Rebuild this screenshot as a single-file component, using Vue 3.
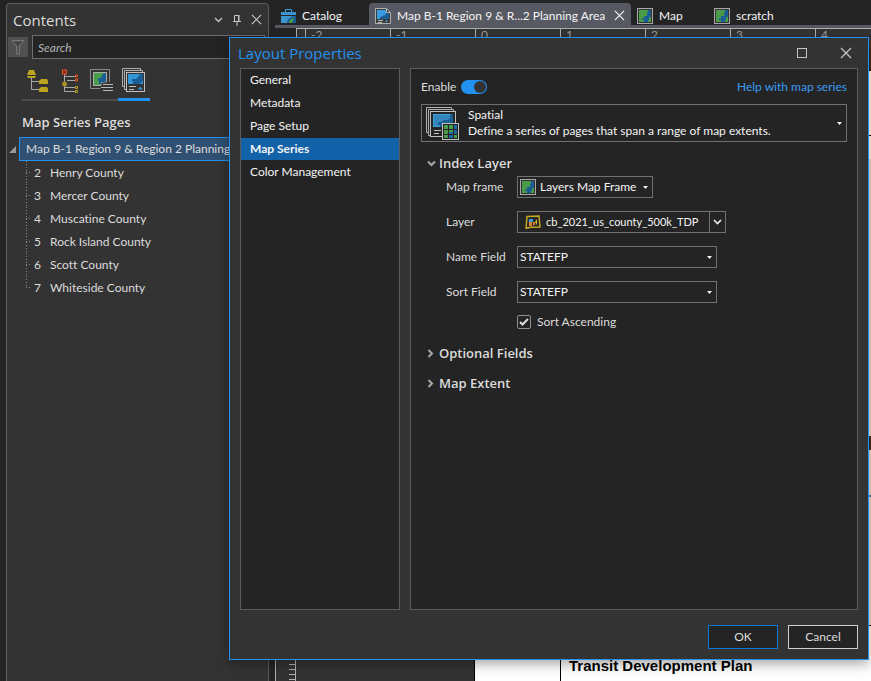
<script setup>
import { ref } from 'vue'

const pages = ref([
  { n: 2, name: 'Henry County' },
  { n: 3, name: 'Mercer County' },
  { n: 4, name: 'Muscatine County' },
  { n: 5, name: 'Rock Island County' },
  { n: 6, name: 'Scott County' },
  { n: 7, name: 'Whiteside County' },
])
const sections = ['General', 'Metadata', 'Page Setup', 'Map Series', 'Color Management']
const section = ref('Map Series')
const rulerMarks = ['-2', '-1', '0', '1', '2', '3', '4']
const enabled = ref(true)
const ascending = ref(true)
const search = ref('')
const mapFrame = ref('Layers Map Frame')
const layer = ref('cb_2021_us_county_500k_TDP')
const nameField = ref('STATEFP')
const sortField = ref('STATEFP')
</script>

<template>
  <div class="app">
    <svg class="defs" aria-hidden="true">
      <symbol id="map-tile" viewBox="0 0 16 16">
        <rect x=".5" y=".5" width="15" height="15" fill="#333" stroke="#a8a8a8" />
        <rect x="2" y="2" width="12" height="12" fill="#4a9b47" />
        <path d="M14 2v7h-2v3h-1v2H7v-2H5v-2l2 1V8h3V5l1-1V2z" fill="#1b5e96" />
      </symbol>
      <symbol id="cross" viewBox="0 0 12 12">
        <path d="M1 1l10 10M11 1L1 11" stroke="currentColor" stroke-width="1.3" fill="none" />
      </symbol>
      <symbol id="caret" viewBox="0 0 5 3">
        <path d="M0 0h5L2.500 3z" fill="currentColor" />
      </symbol>
    </svg>

    <aside class="contents">
      <header class="contents-head">
        <h2>Contents</h2>
        <button class="bare" aria-label="Options">
          <svg width="9" height="6" viewBox="0 0 9 6"><path d="M1 1l3.500 3.500L8 1" fill="none" stroke="currentColor" stroke-width="1.400" /></svg>
        </button>
        <button class="bare" aria-label="Pin">
          <svg width="8" height="12" viewBox="0 0 8 12"><path d="M1.500 7V1.500h4V7M0 7.500h8M4 8v4" fill="none" stroke="currentColor" /><path d="M5 1h1.500v6H5z" fill="currentColor" /></svg>
        </button>
        <button class="bare" aria-label="Close">
          <svg width="11" height="11"><use href="#cross" /></svg>
        </button>
      </header>

      <div class="search-row">
        <button class="filter" aria-label="Filter">
          <svg width="14" height="16" viewBox="0 0 14 16"><path d="M1 1.500h12L8.500 7v8h-3V7z" fill="none" stroke="#777" /><path d="M3 3h8L7 7z" fill="#444" /></svg>
        </button>
        <input v-model="search" type="text" placeholder="Search" aria-label="Search" />
      </div>

      <nav class="view-tabs">
        <button class="view-tab" aria-label="List by drawing order">
          <svg width="24" height="24" viewBox="0 0 24 24">
            <path d="M5.500 9v11.500H14M5.500 12.500H14" fill="none" stroke="#a8a8a8" />
            <path d="M3 1h5l2 5H1zM1 7h9l-1 2H2zM15 10h6l1 2v3h-9v-3zM15 18h6l1 2v3h-9v-3z" fill="#bda41f" />
          </svg>
        </button>
        <button class="view-tab" aria-label="List by source">
          <svg width="24" height="24" viewBox="0 0 24 24">
            <path d="M6.500 5v17.500H17M6.500 7.500H17M9 11.500h8M6.500 18.500H17" fill="none" stroke="#a8a8a8" />
            <rect x="4.500" y="1" width="4" height="4" fill="#7b2b17" stroke="#e8562a" />
            <path d="M17.500 6h2v2h-2zM17.500 10h2v2h-2z" fill="none" stroke="#e8562a" />
            <circle cx="6.500" cy="15" r="2.500" fill="#a88d20" />
            <path d="M17.500 17.500h2v2h-2zM17.500 21.500h2v2h-2z" fill="none" stroke="#bda41f" />
          </svg>
        </button>
        <button class="view-tab" aria-label="List by map frame">
          <svg width="24" height="24" viewBox="0 0 24 24">
            <path d="M10 19.500H.5V.5h19V13" fill="none" stroke="#8a8a8a" />
            <path d="M3.500 3.500h13V13H11v3.500H3.500z" fill="#4a9b47" stroke="#b0b0b0" />
            <path d="M16 4v9h-5v2H9v-3l-1-1V9h3l1-3 2-2z" fill="#1b5e96" />
            <path d="M13 15.500h10M11 18.500h12M13 21.500h10" stroke="#b8b8b8" />
          </svg>
        </button>
        <button class="view-tab active" aria-label="List map series pages">
          <svg width="24" height="24" viewBox="0 0 24 24">
            <path d="M3 18.500H.5V.5h18V3M5 21.500H2.500v-19h18V5" fill="none" stroke="#b0b0b0" />
            <rect x="4.500" y="4.500" width="18" height="19" fill="#333" stroke="#c0c0c0" />
            <path d="M6 6h15v10H6z" fill="#3296d6" />
            <path d="M18 6h3v6l-3 4h-7v-3h-1v-2h4l2-2z" fill="#1b5e96" />
            <path d="M7 18.500h7M7 21.500h5" stroke="#c0c0c0" />
            <path d="M16 21.500l2-3 3 3z" fill="#3296d6" />
          </svg>
        </button>
      </nav>

      <h3>Map Series Pages</h3>
      <div class="tree">
        <div class="tree-root">
          <svg width="7" height="7" viewBox="0 0 7 7"><path d="M7 0v7H0z" fill="#999" /></svg>
          <div class="root-label">Map B-1 Region 9 &amp; Region 2 Planning Area</div>
        </div>
        <ul>
          <li v-for="p in pages" :key="p.n"><span class="num">{{ p.n }}</span>{{ p.name }}</li>
        </ul>
      </div>
    </aside>

    <main class="workspace">
      <nav class="doc-tabs">
        <button class="doc-tab catalog">
          <svg width="15" height="14" viewBox="0 0 15 14">
            <path d="M4.500 3V.5h6V3" fill="none" stroke="#3b9be0" />
            <path d="M0 3h15v3H0zM0 7h15v7H0z" fill="#3b93d0" />
            <path d="M6 14c0-4 4-7 8-7h1v7z" fill="#1b5e96" /><path d="M8 14c0-3 3-5 5-5l-2 5z" fill="#4a9b47" />
          </svg>
          Catalog
        </button>
        <button class="doc-tab current">
          <svg width="16" height="16" viewBox="0 0 16 16">
            <path d="M.5.5h11l4 4v11H.5z" fill="#3b3b3b" stroke="#b0b0b0" />
            <path d="M2 2h9v3h3v6H2z" fill="#3b9be0" /><path d="M11 5h3v6H5V9l5-2z" fill="#1b5e96" />
            <path d="M11.500 1v3.500H15M3 12.500h5M3 14.500h4" fill="none" stroke="#b8b8b8" /><path d="M10 14l1.500-2 1.500 2z" fill="#3b9be0" />
          </svg>
          <span>Map B-1 Region 9 &amp; R...2 Planning Area</span>
          <svg width="11" height="11"><use href="#cross" /></svg>
        </button>
        <button class="doc-tab map"><svg width="16" height="16"><use href="#map-tile" /></svg>Map</button>
        <button class="doc-tab"><svg width="16" height="16"><use href="#map-tile" /></svg>scratch</button>
      </nav>
      <div class="h-ruler">
        <span v-for="m in rulerMarks" :key="m" class="mark">{{ m }}</span>
      </div>
      <div class="canvas-row">
        <div class="v-ruler"></div>
        <div class="canvas">
          <div class="page">
            <div class="map-edge"></div>
            <div class="title-block">Transit Development Plan</div>
          </div>
        </div>
      </div>
    </main>

    <section class="dialog" role="dialog" aria-labelledby="dlg-title">
      <header class="dialog-head">
        <h1 id="dlg-title">Layout Properties</h1>
        <button class="bare" aria-label="Maximize">
          <svg width="10" height="10" viewBox="0 0 10 10"><rect x=".5" y=".5" width="9" height="9" fill="none" stroke="currentColor" /></svg>
        </button>
        <button class="bare" aria-label="Close"><svg width="12" height="12"><use href="#cross" /></svg></button>
      </header>

      <div class="dialog-body">
        <nav class="sections">
          <button v-for="s in sections" :key="s" :class="{ selected: s === section }" @click="section = s">{{ s }}</button>
        </nav>

        <div class="settings">
          <div class="enable-row">
            <label for="enable">Enable</label>
            <input id="enable" v-model="enabled" class="switch" type="checkbox" />
            <a href="#">Help with map series</a>
          </div>

          <button class="series-type">
            <svg width="33" height="33" viewBox="0 0 33 33">
              <path d="M3 25.500H.5V.5h25V3M5 28.500H2.500v-26h25V5" fill="none" stroke="#b0b0b0" />
              <rect x="4.500" y="4.500" width="25" height="25" fill="#242424" stroke="#c0c0c0" />
              <path d="M7 7h20v13H7z" fill="#3b9fdc" /><path d="M8 8h18v11H8z" fill="#3586bd" />
              <path d="M24 7h3v13H14v-2h-2v-3h4l2-2h4l2-2z" fill="#1b5e96" />
              <path d="M8 23.500h7M8 26.500h5" stroke="#c0c0c0" />
              <rect x="16.500" y="16.500" width="16" height="16" fill="#242424" stroke="#c0c0c0" />
              <path d="M18 18h4v4h-4zM23 18h4v4h-4zM18 23h4v4h-4zM23 23h4v4h-4zM18 28h4v3h-4z" fill="#4a9b47" />
              <path d="M28 18h3v4h-3zM28 23h3v4h-3zM24 25h3v2h-4zM23 28h4v3h-4z" fill="#1b6aa5" /><path d="M28 28h3v3h-3z" fill="#4a9b47" />
            </svg>
            <span class="series-text"><span>Spatial</span><span>Define a series of pages that span a range of map extents.</span></span>
            <svg width="5" height="3"><use href="#caret" /></svg>
          </button>

          <button class="group">
            <svg width="9" height="9" viewBox="0 0 9 9"><path d="M1 2.500l3.500 3.500L8 2.500" fill="none" stroke="#a8a8a8" stroke-width="2" /></svg>
            Index Layer
          </button>

          <div class="form">
            <label for="frame">Map frame</label>
            <div class="field frame">
              <svg width="16" height="16"><use href="#map-tile" /></svg>
              <select id="frame" v-model="mapFrame"><option>Layers Map Frame</option></select>
              <svg class="arrow" width="5" height="3"><use href="#caret" /></svg>
            </div>

            <label for="layer">Layer</label>
            <div class="field layer">
              <svg width="16" height="14" viewBox="0 0 16 14">
                <path d="M2 1.500L14 1l1 11-9 .3-5 1z" fill="#2a2a2a" stroke="#c9ab22" stroke-width="1.400" />
                <path d="M4 4h4v3H4z" fill="#3b9be0" /><path d="M4 7h3v4H4zM8 7h2v3H8z" fill="#e0812b" /><path d="M12 4v6l-2-3z" fill="#d8b83a" />
              </svg>
              <select id="layer" v-model="layer"><option>cb_2021_us_county_500k_TDP</option></select>
              <span class="drop"><svg width="9" height="6" viewBox="0 0 9 6"><path d="M1 1l3.500 3.500L8 1" fill="none" stroke="#eee" stroke-width="1.600" /></svg></span>
            </div>

            <label for="name-field">Name Field</label>
            <div class="field column">
              <select id="name-field" v-model="nameField"><option>STATEFP</option></select>
              <svg class="arrow" width="5" height="3"><use href="#caret" /></svg>
            </div>

            <label for="sort-field">Sort Field</label>
            <div class="field column">
              <select id="sort-field" v-model="sortField"><option>STATEFP</option></select>
              <svg class="arrow" width="5" height="3"><use href="#caret" /></svg>
            </div>
          </div>

          <label class="ascending">
            <span class="tick">
              <input v-model="ascending" type="checkbox" />
              <svg v-if="ascending" width="10" height="8" viewBox="0 0 10 8"><path d="M1 4l2.500 2.500L9 1" fill="none" stroke="#ddd" stroke-width="2" /></svg>
            </span>
            Sort Ascending
          </label>

          <button v-for="g in ['Optional Fields', 'Map Extent']" :key="g" class="group">
            <svg width="9" height="9" viewBox="0 0 9 9"><path d="M1.500 1L5 4.500 1.500 8" fill="none" stroke="#a8a8a8" stroke-width="2" /></svg>
            {{ g }}
          </button>
        </div>
      </div>

      <footer class="dialog-foot">
        <button class="action primary">OK</button>
        <button class="action">Cancel</button>
      </footer>
    </section>
  </div>
</template>

<style>
body {
  background: #242424;
}
</style>

<style scoped>
.app {
  position: relative;
  display: flex;
  height: 100vh;
  overflow: hidden;
  background: #242424;
  color: #dcdcdc;
  font: 12px/16px Lato, "Open Sans", sans-serif;
  font-variant-ligatures: none;
}
.app *,
.app *::before {
  box-sizing: border-box;
}
.defs {
  position: absolute;
  width: 0;
  height: 0;
}
h1, h2, h3, ul {
  margin: 0;
  padding: 0;
}
button, input, select {
  margin: 0;
  padding: 0;
  border: 0;
  background: none;
  color: inherit;
  font: inherit;
  font-variant-ligatures: none;
}
h1, h2, h3, .group {
  font-family: "Open Sans", "Noto Sans", sans-serif;
}
svg {
  flex: none;
  display: block;
}
.bare {
  display: flex;
  align-items: center;
  justify-content: center;
  color: #c4c4c4;
}

/* contents pane */
.contents {
  flex: none;
  width: 263px;
  margin: 3px 6px 0;
  border: 1px solid #5a5c62;
  border-bottom: 0;
  border-radius: 4px 4px 0 0;
  background: #333;
  overflow: hidden;
}
.contents-head {
  display: flex;
  align-items: center;
  gap: 10px;
  height: 31px;
  padding: 0 6px;
}
.contents-head h2 {
  flex: 1;
  font-size: 15px;
  font-weight: 400;
  line-height: 20px;
}
.search-row {
  display: flex;
  align-items: center;
  gap: 4px;
  padding: 0 3px 0 1px;
}
.filter {
  display: flex;
  align-items: center;
  justify-content: center;
  width: 20px;
  height: 20px;
  background: #505050;
}
.search-row input {
  flex: 1;
  min-width: 0;
  height: 24px;
  padding: 0 5px;
  border: 1px solid #6e6e6e;
  background: #242424;
}
.search-row input::placeholder {
  color: #b4b4b4;
  font-style: italic;
  opacity: 1;
}
.view-tabs {
  display: flex;
  padding: 3px 0 0 15px;
}
.view-tab {
  display: flex;
  align-items: center;
  justify-content: center;
  width: 32px;
  height: 39px;
  border-bottom: 2px solid #4c4c4c;
}
.view-tab.active {
  border-bottom: 3px solid #2391f0;
}
h3 {
  padding: 11px 15px 5px;
  font-size: 13px;
  font-weight: 600;
  line-height: 20px;
}
.tree-root {
  display: flex;
  align-items: center;
  gap: 3px;
  padding-left: 2px;
}
.root-label {
  flex: 1;
  height: 24px;
  padding: 0 6px;
  border: 1px solid #2391f0;
  background: #2f5072;
  line-height: 22px;
  white-space: nowrap;
  overflow: hidden;
}
.tree ul {
  padding-left: 19px;
  list-style: none;
}
.tree li {
  display: flex;
  align-items: center;
  height: 23px;
  background:
    repeating-linear-gradient(#888 0 1px, transparent 1px 3px) 0 0 / 1px 100% no-repeat,
    repeating-linear-gradient(90deg, #888 0 1px, transparent 1px 3px) 0 50% / 6px 1px no-repeat;
}
.tree li:last-child {
  background-size: 1px 50%, 6px 1px;
}
.num {
  width: 24px;
  padding-left: 8px;
}

/* document area */
.workspace {
  flex: 1;
  min-width: 0;
  display: flex;
  flex-direction: column;
}
.doc-tabs {
  display: flex;
  flex: none;
  height: 28px;
  padding-top: 3px;
  border-bottom: 3px solid #565862;
  color: #f4f4f4;
  white-space: nowrap;
}
.doc-tab {
  flex: none;
  display: flex;
  align-items: center;
  gap: 6px;
  padding: 3px 6px 0;
}
.doc-tab.catalog {
  width: 94px;
}
.doc-tab.current {
  width: 262px;
  border-radius: 4px 4px 0 0;
  background: #565862;
}
.doc-tab.current span {
  flex: 1;
  text-align: left;
}
.doc-tab.map {
  width: 77px;
}
.h-ruler {
  flex: none;
  display: flex;
  height: 42px;
  margin-left: 21px;
  padding-left: 8px;
  border: 1px solid #b0b0b0;
  border-width: 1px 0 0 1px;
  background: #333;
  color: #a0a0a0;
  overflow: hidden;
}
.mark {
  flex: none;
  width: 85px;
  height: 18px;
  padding-left: 5px;
  border-left: 1px solid #b0b0b0;
  line-height: 12px;
}
.canvas-row {
  flex: 1;
  display: flex;
  min-height: 0;
}
.v-ruler {
  flex: none;
  width: 21px;
  border: 1px solid #b0b0b0;
  border-width: 0 1px;
  background: repeating-linear-gradient(transparent 0 4px, #b0b0b0 4px 5px) 100% 0 / 6px 100% no-repeat #333;
}
.canvas {
  flex: 1;
  min-width: 0;
  display: flex;
  padding-left: 178px;
  background: #333;
}
.page {
  flex: 1;
  display: flex;
  flex-direction: column;
  padding-left: 85px;
  border: 1px solid #000;
  border-width: 1px 0 0 1px;
  background: #fff;
  color: #000;
}
.map-edge {
  flex: 1;
  border: 1px solid #000;
  border-width: 0 0 1px 1px;
  background: linear-gradient(#fff 0 64px, #000 64px 65px, #fff 65px 88px, #e4e4e4 88px 365px, #333 365px 379px, #e4e4e4 379px 424px, #3b7db5 424px 426px, #e4e4e4 426px);
}
.title-block {
  height: 55px;
  padding: 30px 8px 0;
  border-left: 1px solid #000;
  font: bold 15px/20px "Liberation Sans", Arial, sans-serif;
  white-space: nowrap;
}

/* dialog */
.dialog {
  position: absolute;
  inset: 37px 2px 21px 229px;
  display: flex;
  flex-direction: column;
  border: 1px solid #2391f0;
  background: #333;
  box-shadow: 0 4px 12px rgba(0, 0, 0, 0.35);
}
.dialog-head {
  display: flex;
  align-items: center;
  gap: 33px;
  height: 30px;
  padding: 0 16px 0 8px;
}
.dialog-head h1 {
  flex: 1;
  color: #2391f0;
  font-size: 15px;
  font-weight: 400;
  line-height: 20px;
}
.dialog-body {
  flex: 1;
  display: flex;
  gap: 10px;
  min-height: 0;
  padding: 0 10px;
}
.sections, .settings {
  border: 1px solid #5c5c5c;
  background: #242424;
}
.sections {
  flex: none;
  display: flex;
  flex-direction: column;
  gap: 1px;
  width: 160px;
  color: #f4f4f4;
}
.sections button {
  height: 22px;
  padding: 0 9px;
  text-align: left;
}
.sections .selected {
  background: #1162a8;
  font-weight: 700;
}
.settings {
  flex: 1;
  min-width: 0;
  display: flex;
  flex-direction: column;
  padding: 9px 10px;
}
.enable-row {
  display: flex;
  align-items: center;
  gap: 5px;
  height: 18px;
  margin-bottom: 8px;
}
.enable-row a {
  margin-left: auto;
  color: #3a9df5;
  text-decoration: none;
}
.switch {
  appearance: none;
  display: flex;
  justify-content: flex-end;
  width: 26px;
  height: 14px;
  padding: 1px;
  border-radius: 7px;
  background: #2391f0;
}
.switch::before {
  content: "";
  width: 12px;
  height: 12px;
  border-radius: 6px;
  background: #333;
}
.series-type {
  display: flex;
  align-items: center;
  gap: 9px;
  height: 38px;
  padding: 0 4px;
  border: 1px solid #707070;
  color: #f4f4f4;
  text-align: left;
}
.series-text {
  flex: 1;
  display: flex;
  flex-direction: column;
}
.group {
  display: flex;
  align-items: center;
  gap: 3px;
  height: 22px;
  margin: 10px 0 0 6px;
  font-size: 13px;
  font-weight: 600;
}
.group + .group {
  margin-top: 8px;
}
.form {
  display: grid;
  grid-template-columns: 71px 1fr;
  grid-auto-rows: 22px;
  row-gap: 13px;
  align-items: center;
  margin: 2px 0 0 25px;
}
.field {
  display: flex;
  align-items: center;
  height: 22px;
  border: 1px solid #707070;
  color: #f4f4f4;
}
.field select {
  flex: 1;
  min-width: 0;
  height: 20px;
  padding-left: 2px;
  appearance: none;
}
.field .arrow {
  margin: 0 4px;
}
.frame {
  width: 136px;
  padding-left: 2px;
}
.frame select {
  padding-left: 4px;
}
.layer {
  width: 209px;
  padding-left: 7px;
}
.layer select {
  padding-left: 5px;
  font-size: 11px;
}
.drop {
  display: flex;
  align-items: center;
  justify-content: center;
  width: 16px;
  height: 20px;
  border-left: 1px solid #707070;
}
.column {
  width: 200px;
}
.ascending {
  display: flex;
  align-items: center;
  gap: 6px;
  margin: 11px 0 0 96px;
}
.tick {
  display: grid;
  place-items: center;
}
.tick > * {
  grid-area: 1 / 1;
}
.tick input {
  appearance: none;
  width: 14px;
  height: 14px;
  border: 1px solid #909090;
  border-radius: 2px;
}
.tick svg {
  pointer-events: none;
}
.ascending + .group {
  margin-top: 12px;
}
.dialog-foot {
  display: flex;
  justify-content: flex-end;
  gap: 10px;
  padding: 15px 10px 10px;
}
.action {
  width: 70px;
  height: 24px;
  border: 1px solid #d0d0d0;
  background: #242424;
}
.action.primary {
  border-color: #0f78d4;
}
</style>
